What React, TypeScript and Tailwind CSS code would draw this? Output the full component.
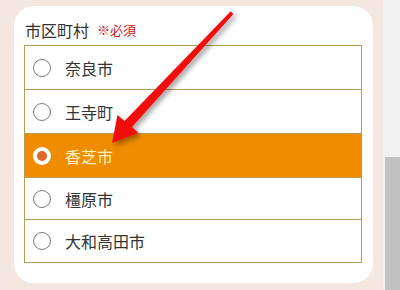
const cities = [
  { name: "奈良市", h: "h-[44px]", selected: false },
  { name: "王寺町", h: "h-[44px]", selected: false },
  { name: "香芝市", h: "h-[44px]", selected: true },
  { name: "橿原市", h: "h-[42px]", selected: false },
  { name: "大和高田市", h: "h-[42px]", selected: false },
];

function Radio({ checked }: { checked: boolean }) {
  if (checked) {
    return (
      <span className="flex h-[18px] w-[18px] shrink-0 items-center justify-center rounded-full bg-white">
        <span className="h-[10px] w-[10px] rounded-full bg-[#e2652a]" />
      </span>
    );
  }
  return (
    <span className="h-[18px] w-[18px] shrink-0 rounded-full border-[1.5px] border-[#7a7a7a] bg-white" />
  );
}

function Arrow() {
  return (
    <svg
      className="pointer-events-none absolute left-0 top-0"
      width="400"
      height="290"
      viewBox="0 0 400 290"
    >
      <defs>
        <filter id="arrowShadow" x="-20%" y="-20%" width="140%" height="140%">
          <feDropShadow dx="3" dy="3" stdDeviation="2.5" floodColor="#000" floodOpacity="0.35" />
        </filter>
      </defs>
      <path
        d="M230.5 11.5 Q233 12 233 14.5 L132 127 L138.5 133 L112 143 L117.5 115 L124.5 121 Z"
        fill="#f20d0d"
        filter="url(#arrowShadow)"
      />
    </svg>
  );
}

export default function App() {
  return (
    <div className="relative flex h-[290px] w-[400px] overflow-hidden font-['Noto_Sans_CJK_JP',sans-serif]">
      <div className="w-[383px] bg-[#f3e7df] pl-[14px] pt-[6px]">
        <div className="h-[277px] w-[359px] rounded-[20px] bg-white pl-[10px] pr-[11px] pt-[12px]">
          <div className="mb-[3px] flex h-[24px] items-center pl-[1px]">
            <span className="text-[16px] leading-[24px] text-[#333]">市区町村</span>
            <span className="ml-[8px] text-[13px] leading-[24px] text-[#d0101b]">※必須</span>
          </div>
          <div className="border border-[#b59c55]">
            {cities.map((c, i) => (
              <div
                key={c.name}
                className={
                  (c.selected ? "bg-[#f08c00] " : "bg-white ") +
                  (i < cities.length - 1 ? "border-b border-[#b59c55] " : "") +
                  c.h +
                  " flex items-center gap-[14px] pl-[8px]"
                }
              >
                <Radio checked={c.selected} />
                <span
                  className={
                    c.selected
                      ? "text-[16px] text-[#fff2bd]"
                      : "text-[16px] text-[#333]"
                  }
                >
                  {c.name}
                </span>
              </div>
            ))}
          </div>
        </div>
      </div>
      <div className="flex w-[17px] flex-col bg-[#f1f1f1] pl-[2px] pt-[157px]">
        <div className="flex-1 bg-[#c1c1c1]" />
      </div>
      <Arrow />
    </div>
  );
}
